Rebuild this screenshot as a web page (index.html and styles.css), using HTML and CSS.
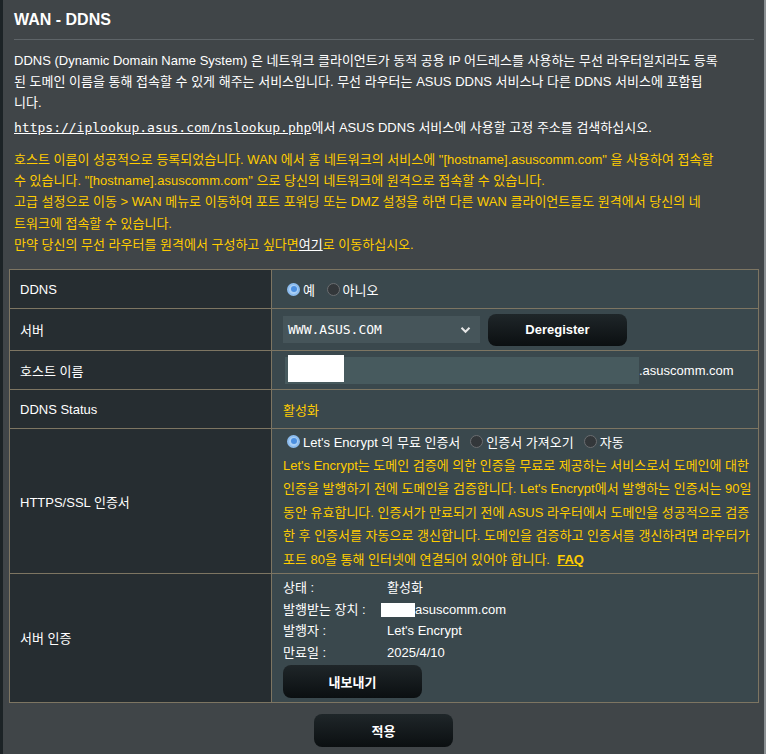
FILE: index.html
```html
<!DOCTYPE html>
<html lang="ko">
<head>
<meta charset="utf-8">
<title>WAN - DDNS</title>
<link rel="stylesheet" href="styles.css">
</head>
<body>
<div class="page">
  <div class="panel">
    <h1 class="title">WAN - DDNS</h1>
    <div class="rule"></div>
    <p class="desc">DDNS (Dynamic Domain Name System) 은 네트워크 클라이언트가 동적 공용 IP 어드레스를 사용하는 무선 라우터일지라도 등록<br>된 도메인 이름을 통해 접속할 수 있게 해주는 서비스입니다. 무선 라우터는 ASUS DDNS 서비스나 다른 DDNS 서비스에 포함됩<br>니다.</p>
    <p class="desc link-line"><a class="mono-link" href="#">https://iplookup.asus.com/nslookup.php</a>에서 ASUS DDNS 서비스에 사용할 고정 주소를 검색하십시오.</p>
    <div class="notice">
      <p>호스트 이름이 성공적으로 등록되었습니다. WAN 에서 홈 네트워크의 서비스에 "[hostname].asuscomm.com" 을 사용하여 접속할<br>수 있습니다. "[hostname].asuscomm.com" 으로 당신의 네트워크에 원격으로 접속할 수 있습니다.</p>
      <p>고급 설정으로 이동 &gt; WAN 메뉴로 이동하여 포트 포워딩 또는 DMZ 설정을 하면 다른 WAN 클라이언트들도 원격에서 당신의 네<br>트워크에 접속할 수 있습니다.</p>
      <p>만약 당신의 무선 라우터를 원격에서 구성하고 싶다면<a class="here" href="#">여기</a>로 이동하십시오.</p>
    </div>

    <table class="form">
      <colgroup><col class="c-label"><col class="c-value"></colgroup>
      <tr class="r-ddns">
        <th>DDNS</th>
        <td>
          <label class="radio"><span class="dot on"></span>예</label>
          <label class="radio"><span class="dot"></span>아니오</label>
        </td>
      </tr>
      <tr class="r-server">
        <th>서버</th>
        <td>
          <div class="inline">
            <div class="select"><span>WWW.ASUS.COM</span>
              <svg class="chev" width="11" height="8" viewBox="0 0 11 8"><path d="M1.5 1.8 L5.5 5.8 L9.5 1.8" fill="none" stroke="#e6e6e6" stroke-width="2"/></svg>
            </div>
            <button class="btn btn-dereg">Deregister</button>
          </div>
        </td>
      </tr>
      <tr class="r-host">
        <th>호스트 이름</th>
        <td>
          <div class="inline">
            <div class="host-input"><span class="redact"></span></div>
            <span class="suffix">.asuscomm.com</span>
          </div>
        </td>
      </tr>
      <tr class="r-status">
        <th>DDNS Status</th>
        <td><span class="yellow">활성화</span></td>
      </tr>
      <tr class="r-https">
        <th>HTTPS/SSL 인증서</th>
        <td>
          <div class="radios">
            <label class="radio"><span class="dot on"></span>Let's Encrypt 의 무료 인증서</label>
            <label class="radio"><span class="dot"></span>인증서 가져오기</label>
            <label class="radio"><span class="dot"></span>자동</label>
          </div>
          <p class="le-text">Let's Encrypt는 도메인 검증에 의한 인증을 무료로 제공하는 서비스로서 도메인에 대한<br>인증을 발행하기 전에 도메인을 검증합니다. Let's Encrypt에서 발행하는 인증서는 90일<br>동안 유효합니다. 인증서가 만료되기 전에 ASUS 라우터에서 도메인을 성공적으로 검증<br>한 후 인증서를 자동으로 갱신합니다. 도메인을 검증하고 인증서를 갱신하려면 라우터가<br>포트 80을 통해 인터넷에 연결되어 있어야 합니다. &nbsp;<a class="faq" href="#">FAQ</a></p>
        </td>
      </tr>
      <tr class="r-cert">
        <th>서버 인증</th>
        <td>
          <div class="cert-grid">
            <span>상태 :</span><span>활성화</span>
            <span>발행받는 장치 :</span><span class="issued"><span class="redact2"></span>asuscomm.com</span>
            <span>발행자 :</span><span>Let's Encrypt</span>
            <span>만료일 :</span><span>2025/4/10</span>
          </div>
          <button class="btn btn-export">내보내기</button>
        </td>
      </tr>
    </table>

    <div class="apply-row"><button class="btn btn-apply">적용</button></div>
  </div>
</div>
</body>
</html>
```
FILE: styles.css
```css
html, body {
  margin: 0;
  padding: 0;
  background: #404548;
}
body {
  font-family: "Liberation Sans", Arial, "Noto Sans CJK KR", sans-serif;
  font-size: 13px;
  color: #ffffff;
}
.page {
  width: 766px;
  height: 754px;
  display: flex;
  overflow: hidden;
}
.panel {
  box-sizing: border-box;
  width: 766px;
  height: 754px;
  background: #404548;
  border-left: 3px solid #1c2326;
  border-right: 2px solid #8a8f92;
  padding: 0 6px 0 6px;
}
.title {
  margin: 0;
  padding: 10px 0 0 5px;
  font-size: 16px;
  line-height: 20px;
  font-weight: bold;
  color: #ffffff;
}
.rule {
  height: 1px;
  background: #5e6468;
  margin: 9px 4px 0 5px;
}
.desc {
  margin: 10px 0 0 5px;
  padding-right: 4px;
  line-height: 21px;
  color: #ffffff;
  white-space: nowrap;
}
.link-line {
  margin-top: 4px;
}
.mono-link {
  font-family: "DejaVu Sans Mono", "Liberation Mono", monospace;
  font-size: 13px;
  color: #ffffff;
  text-decoration: underline;
}
.notice {
  margin: 11px 0 0 5px;
  padding-right: 4px;
  color: #ffcc00;
  line-height: 21.2px;
  white-space: nowrap;
}
.notice p {
  margin: 0;
}
.here {
  color: #ffffff;
  text-decoration: underline;
}
.form {
  margin-top: 14px;
  width: 750px;
  border-collapse: collapse;
  table-layout: fixed;
}
.c-label {
  width: 262px;
}
.form th, .form td {
  border: 1px solid #7d7562;
  text-align: left;
  vertical-align: middle;
}
.form th {
  background: #262d31;
  font-weight: normal;
  padding: 0 0 0 10px;
  color: #ffffff;
}
.form td {
  background: #3a484d;
  padding: 0 10px 0 11px;
}
.r-ddns { height: 39px; }
.r-server { height: 42px; }
.r-host { height: 39px; }
.r-status { height: 39px; }
.r-https { height: 145px; }
.r-cert { height: 128px; }

.radio {
  display: inline-flex;
  align-items: center;
  margin-right: 4px;
  color: #ffffff;
  padding-left: 4px;
}
.dot {
  box-sizing: border-box;
  width: 13px;
  height: 13px;
  border-radius: 50%;
  background: #33373a;
  border: 1px solid #6a6d70;
  margin-right: 3px;
  position: relative;
}
.dot.on {
  background: #a9cff6;
  border: 2px solid #8cbcee;
}
.dot.on::after {
  content: "";
  position: absolute;
  left: 1.5px; top: 1.5px;
  width: 6px; height: 6px;
  border-radius: 50%;
  background: #4b8fe0;
}
.inline {
  display: flex;
  align-items: center;
}
.select {
  box-sizing: border-box;
  width: 197px;
  height: 27px;
  background: #46555a;
  display: flex;
  align-items: center;
  justify-content: space-between;
  padding: 0 9px 0 5px;
  font-family: "DejaVu Sans Mono", "Liberation Mono", monospace;
  font-size: 13px;
  color: #ffffff;
}
.btn {
  font-family: "Liberation Sans", Arial, "Noto Sans CJK KR", sans-serif;
  font-weight: bold;
  font-size: 13px;
  color: #ffffff;
  border: none;
  border-radius: 8px;
  background: linear-gradient(#1f2629, #0b0f11);
  cursor: pointer;
}
.btn-dereg {
  width: 139px;
  height: 32px;
  margin-left: 8px;
}
.host-input {
  box-sizing: border-box;
  width: 354px;
  height: 27px;
  background: #475a5e;
  margin-left: 2px;
  position: relative;
}
.redact {
  position: absolute;
  left: 3px;
  top: -2px;
  width: 56px;
  height: 27px;
  background: #ffffff;
}
.suffix {
  color: #ffffff;
}
.yellow {
  color: #ffcc00;
}
.radios {
  display: flex;
  align-items: center;
  margin-top: 1px;
}
.radios .radio {
  margin-right: 6px;
}
.le-text {
  margin: 3px 0 0 0;
  color: #ffcc00;
  line-height: 23.5px;
  white-space: nowrap;
}
.faq {
  color: #ffcc00;
  text-decoration: underline;
  font-weight: bold;
}
.cert-grid {
  display: grid;
  grid-template-columns: 104px auto;
  line-height: 21.7px;
  color: #ffffff;
  padding-top: 3px;
}
.issued {
  display: flex;
  align-items: center;
}
.redact2 {
  display: inline-block;
  width: 34px;
  height: 14px;
  background: #ffffff;
  margin-left: -6px;
}
.btn-export {
  width: 139px;
  height: 33px;
  margin: 1px 0 4px 0;
}
.apply-row {
  display: flex;
  justify-content: center;
  padding-top: 11px;
}
.btn-apply {
  width: 139px;
  height: 33px;
}
```
